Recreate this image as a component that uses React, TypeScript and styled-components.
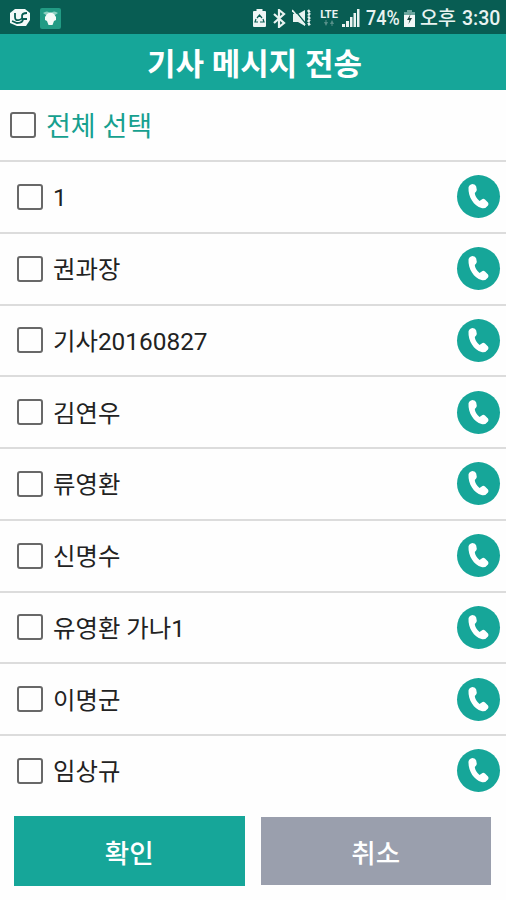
import React, { useState } from 'react';
import styled, { createGlobalStyle } from 'styled-components';

const GlobalStyle = createGlobalStyle`
  body { margin: 0; background: #fefefe; }
  * { box-sizing: border-box; }
`;

const Screen = styled.div`
  width: 506px;
  height: 900px;
  display: flex;
  flex-direction: column;
  overflow: hidden;
  background: #fefefe;
  font-family: Roboto, 'Noto Sans CJK KR', sans-serif;
`;

const StatusBar = styled.header`
  flex: none;
  height: 34px;
  display: flex;
  justify-content: space-between;
  background: #085d53;
  color: #e9f3f1;
`;

const StatusGroup = styled.div`
  display: flex;
  align-items: center;
  height: 36px;
  padding: 0 8px 0 9px;
`;

const StatusIcon = styled.svg<{ $gap?: number }>`
  flex: none;
  display: block;
  margin-right: ${({ $gap = 0 }) => $gap}px;
`;

const Lte = styled.span`
  display: flex;
  flex-direction: column;
  align-items: center;
  width: 20px;
  margin-right: 3px;
  font-size: 11px;
  font-weight: 700;
  line-height: 10px;
`;

const Battery = styled.span`
  width: 36px;
  margin-right: 2px;
  padding-top: 1px;
  font-size: 19.5px;
  font-weight: 500;
  white-space: nowrap;
  transform: scaleX(0.92);
  transform-origin: left;
`;

const Clock = styled.span<{ $width: number }>`
  width: ${({ $width }) => $width}px;
  padding-top: 1px;
  font-size: 19.5px;
  font-weight: 500;
  line-height: 24px;
  white-space: nowrap;
`;

const TitleBar = styled.h1`
  flex: none;
  margin: 0;
  height: 56px;
  display: flex;
  align-items: center;
  justify-content: center;
  padding: 5px 0 0 3px;
  background: #16a699;
  color: #fff;
  font-size: 31px;
  font-weight: 700;
  line-height: 40px;
`;

const SelectAll = styled.label`
  flex: none;
  display: flex;
  align-items: center;
  height: 72px;
  padding: 0 0 0 10px;
  gap: 10px;
  border-bottom: 2px solid #dcdcdc;
  color: #16a08f;
  font-size: 27px;
  line-height: 34px;
`;

const Check = styled.input`
  appearance: none;
  flex: none;
  width: 26px;
  height: 26px;
  margin: 0;
  border: 2px solid #686868;
  border-radius: 3px;
  &:checked { background: #16a699; }
`;

const SelectAllText = styled.span`
  padding-top: 3px;
`;

const List = styled.ul`
  margin: 0;
  padding: 0;
  list-style: none;
`;

const Row = styled.li`
  display: flex;
  align-items: center;
  justify-content: space-between;
  height: 71.75px;
  padding: 0 6px 0 17px;
  border-bottom: 2px solid #dcdcdc;
  &:last-child { border-bottom-color: transparent; }
`;

const RowLabel = styled.label`
  display: flex;
  align-items: center;
  gap: 10px;
  color: #222;
  font-size: 24.4px;
  line-height: 32px;
`;

const Name = styled.span`
  padding-top: 3px;
`;

const CallButton = styled.button`
  width: 43px;
  height: 43px;
  padding: 0;
  border: 0;
  border-radius: 50%;
  background: #16a699;
`;

const CallIcon = styled.svg`
  display: block;
`;

const Actions = styled.footer`
  display: flex;
  align-items: center;
  gap: 16px;
  padding: 8px 15px 0 14px;
`;

const Action = styled.button<{ $muted?: boolean }>`
  flex: 1;
  height: ${({ $muted }) => ($muted ? 68 : 70)}px;
  padding: 1px 0 0;
  border: 0;
  background: ${({ $muted }) => ($muted ? '#9a9fad' : '#16a699')};
  color: #fff;
  font-family: inherit;
  font-size: 26.5px;
  font-weight: 500;
`;

const drivers = ['1', '권과장', '기사20160827', '김연우', '류영환', '신명수', '유영환 가나1', '이명군', '임상규'];

const Phone = () => (
  <CallIcon width="43" height="43" viewBox="0 0 43 43" fill="#fff" aria-hidden="true">
    <path d="M11.5 12.5Q12 9.500 15.500 9 18.500 9 19.200 11.500L19.800 15Q19.500 16.700 17.800 18 18 22 22.500 26L25.500 24Q26.500 23.300 28 24.500L31 27.500Q32 29 31 30.500 28.500 34 24.500 33C17 31 11 22 11.500 12.500Z" />
  </CallIcon>
);

export default function App() {
  const [selected, setSelected] = useState<string[]>([]);
  const toggle = (name: string) =>
    setSelected((s) => (s.includes(name) ? s.filter((n) => n !== name) : [...s, name]));
  const all = selected.length === drivers.length;

  return (
    <>
      <GlobalStyle />
      <Screen>
        <StatusBar>
          <StatusGroup>
            <StatusIcon $gap={9} width="22" height="20" viewBox="0 0 22 20">
              <path d="M6 1h10l5 4v7l-4 6H8l-7-3V5Z" fill="#f4faf9" />
              <path d="M6 5v4q0 4 4 3t3-4q0-3 5-3M3 13l5 2q6 0 6-4h4" fill="none" stroke="#085d53" strokeWidth="1.8" />
            </StatusIcon>
            <StatusIcon width="21" height="21" viewBox="0 0 21 21">
              <rect width="21" height="21" rx="2" fill="#229b84" />
              <path d="M3 5q4-3 7.500 0 3.500-3 7.500 0l-3 2H6Z" fill="#8bd0c1" />
              <path d="M7 6q3.500-3 7 0l2 3v3l-2 1-1.500 4h-4L7 13l-2-1V9Z" fill="#f3faf7" />
            </StatusIcon>
          </StatusGroup>
          <StatusGroup>
            <StatusIcon $gap={7} width="13" height="18" viewBox="0 0 13 18">
              <path d="M3.500 2V0h6v2H12q1 0 1 1v14q0 1-1 1H1q-1 0-1-1V3q0-1 1-1Z" fill="#eff6f5" />
              <path d="m4 9 2.500-3L9 9M3 10l-1 3h3m5-3 1 3H7" fill="none" stroke="#085d53" strokeWidth="1.2" />
            </StatusIcon>
            <StatusIcon $gap={6} width="13" height="19" viewBox="0 0 13 19">
              <path d="m1 5 10 9-5 4V1l5 4L1 14" fill="none" stroke="#e9f3f1" strokeWidth="2.2" />
            </StatusIcon>
            <StatusIcon $gap={7} width="20" height="18" viewBox="0 0 20 18">
              <path d="M1 5h5l7-4v16l-7-4H1Z" fill="#e9f3f1" />
              <path d="m2 0 12 15" stroke="#085d53" strokeWidth="1.3" />
              <path d="m0 1 13 15" stroke="#e9f3f1" strokeWidth="1.8" />
              <path d="m16 1 2 3-2 3 2 3-2 3 2 4" fill="none" stroke="#e9f3f1" strokeWidth="2.4" strokeDasharray="3 .8" />
            </StatusIcon>
            <Lte>
              LTE
              <svg width="10" height="7" viewBox="0 0 10 7" fill="#579089">
                <path d="M0 2h1.500V0h1v2H4L2 6ZM6 4l2-4 2 4H8.500v2h-1V4Z" />
              </svg>
            </Lte>
            <StatusIcon $gap={6} width="18" height="18" viewBox="0 0 18 18" fill="#e9f3f1">
              <path d="M0 15h3v3H0ZM4 12h3v6H4ZM8 8h2.500v10H8ZM11.500 4H14v14h-2.500ZM15 0h2.500v18H15Z" />
            </StatusIcon>
            <Battery>74%</Battery>
            <StatusIcon $gap={5} width="11" height="17" viewBox="0 0 11 17">
              <path d="M3 2V0h5v2h3v4H0V2Z" fill="#6ba69e" />
              <path d="M0 5h11v12H0Z" fill="#f2f8f7" />
              <path d="M6.500 4 3 10h2.500L4.500 14 8 8H5.500Z" fill="#143f39" />
            </StatusIcon>
            <Clock $width={42}>오후</Clock>
            <Clock $width={36}>3:30</Clock>
          </StatusGroup>
        </StatusBar>
        <TitleBar>기사 메시지 전송</TitleBar>
        <SelectAll>
          <Check type="checkbox" checked={all} onChange={() => setSelected(all ? [] : drivers)} />
          <SelectAllText>전체 선택</SelectAllText>
        </SelectAll>
        <List>
          {drivers.map((name) => (
            <Row key={name}>
              <RowLabel>
                <Check type="checkbox" checked={selected.includes(name)} onChange={() => toggle(name)} />
                <Name>{name}</Name>
              </RowLabel>
              <CallButton aria-label={name}>
                <Phone />
              </CallButton>
            </Row>
          ))}
        </List>
        <Actions>
          <Action>확인</Action>
          <Action $muted>취소</Action>
        </Actions>
      </Screen>
    </>
  );
}
